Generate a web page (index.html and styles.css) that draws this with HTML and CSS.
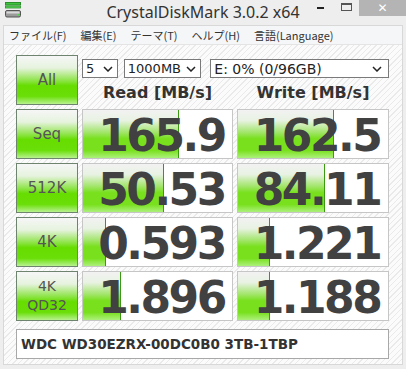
FILE: index.html
```html
<!DOCTYPE html>
<html lang="ja">
<head>
    <meta charset="UTF-8">
    <title>CrystalDiskMark 3.0.2 x64</title>
    <link rel="stylesheet" href="styles.css">
</head>
<body>
    <div class="titlebar">
        <svg class="appicon" width="16" height="16" viewBox="0 0 16 16">
            <rect x="0.5" y="0.5" width="15" height="2.5" fill="#3fc43f" stroke="#2a8f2a"/>
            <rect x="0.5" y="4" width="15" height="2" fill="#5fd65f" stroke="#2a8f2a" stroke-width="0.8"/>
            <rect x="0.5" y="8.5" width="15" height="6.5" rx="1.5" fill="#9a9a9a" stroke="#555"/>
            <rect x="1.5" y="9.5" width="13" height="2" fill="#d8d8d8"/>
            <rect x="12" y="12" width="2" height="1.5" fill="#44dd44"/>
        </svg>
        <div class="title">CrystalDiskMark 3.0.2 x64</div>
        <div class="controls">
            <span class="ctl"><span class="min"></span></span>
            <span class="ctl"><span class="max"></span></span>
            <span class="ctl close">✕</span>
        </div>
    </div>
    <div class="window">
        <div class="menubar">
            <span>ファイル(F)</span>
            <span>編集(E)</span>
            <span>テーマ(T)</span>
            <span>ヘルプ(H)</span>
            <span>言語(Language)</span>
        </div>
        <div class="content">
            <div class="grid">
                <div class="btn">All</div>
                <div class="top">
                    <div class="selects">
                        <div class="select s-count">5<svg class="chev" viewBox="0 0 10 6"><path d="M1 1 L5 5 L9 1" fill="none" stroke="#222" stroke-width="1.5"/></svg></div>
                        <div class="select s-size">1000MB<svg class="chev" viewBox="0 0 10 6"><path d="M1 1 L5 5 L9 1" fill="none" stroke="#222" stroke-width="1.5"/></svg></div>
                        <div class="select s-drive">E: 0% (0/96GB)<svg class="chev" viewBox="0 0 10 6"><path d="M1 1 L5 5 L9 1" fill="none" stroke="#222" stroke-width="1.5"/></svg></div>
                    </div>
                    <div class="heads">
                        <div>Read [MB/s]</div>
                        <div>Write [MB/s]</div>
                    </div>
                </div>

                <div class="btn">Seq</div>
                <div class="bar"><div class="fill" style="width:95px"></div><span>165.9</span></div>
                <div class="bar"><div class="fill" style="width:95px"></div><span>162.5</span></div>

                <div class="btn">512K</div>
                <div class="bar"><div class="fill" style="width:80px"></div><span>50.53</span></div>
                <div class="bar"><div class="fill" style="width:86px"></div><span>84.11</span></div>

                <div class="btn">4K</div>
                <div class="bar"><div class="fill" style="width:22px"></div><span>0.593</span></div>
                <div class="bar"><div class="fill" style="width:31px"></div><span>1.221</span></div>

                <div class="btn two">4K<br>QD32</div>
                <div class="bar"><div class="fill" style="width:37px"></div><span>1.896</span></div>
                <div class="bar"><div class="fill" style="width:31px"></div><span>1.188</span></div>
            </div>
            <div class="drive">WDC WD30EZRX-00DC0B0 3TB-1TBP</div>
        </div>
    </div>
</body>
</html>
```

FILE: styles.css
```css
body {
    margin: 0;
    width: 406px;
    height: 369px;
    background-color: #eeeeee;
    font-family: "DejaVu Sans", sans-serif;
    overflow: hidden;
}
.titlebar {
    height: 25px;
    display: grid;
    grid-template-columns: 1fr auto 1fr;
    align-items: start;
}
.appicon {
    margin: 2px 0 0 5px;
}
.title {
    font-family: "Noto Sans", sans-serif;
    font-size: 16px;
    line-height: 24px;
    color: #333;
}
.controls {
    justify-self: end;
    display: flex;
}
.ctl {
    width: 26px;
    height: 16px;
    display: flex;
    justify-content: center;
    align-items: flex-start;
}
.min {
    width: 7px;
    height: 2px;
    margin-top: 7px;
    background-color: #222;
}
.max {
    width: 9px;
    height: 5px;
    margin-top: 3px;
    border: 1px solid #555;
    border-top-width: 2px;
}
.close {
    width: 47px;
    background-color: #b4b4b4;
    color: #fff;
    font-size: 12px;
    font-weight: bold;
    line-height: 16px;
    align-items: center;
}
.window {
    margin: 0 3px;
    height: 338px;
    border: 1px solid #d8d8d8;
    background-color: #f9f9f9;
}
.menubar {
    height: 18px;
    display: flex;
    gap: 14px;
    padding-left: 5px;
    background-color: #f5f6f8;
    border-bottom: 1px solid #e4e4e4;
    font-family: "Noto Sans CJK JP", sans-serif;
    font-size: 11px;
    line-height: 18px;
    color: #333;
}
.content {
    padding: 10px 12px 5px 12px;
    height: 304px;
    background: repeating-linear-gradient(135deg, #fbfbfb 0px, #fbfbfb 3px, #eaeaea 3px, #eaeaea 4px);
}
.grid {
    display: grid;
    grid-template-columns: 62px 151px 152px;
    grid-auto-rows: 50px;
    column-gap: 4px;
    row-gap: 4px;
}
.btn {
    box-sizing: border-box;
    border: 1px solid #6f846f;
    background: linear-gradient(#f6f6f6 0%, #e6f3de 25%, #98e65a 48%, #66dd00 62%, #6ade08 84%, #b8f290 100%);
    display: flex;
    justify-content: center;
    align-items: center;
    text-align: center;
    font-size: 15px;
    color: #555;
}
.btn.two {
    font-size: 14px;
    line-height: 19px;
}
.top {
    grid-column: 2 / 4;
    display: flex;
    flex-direction: column;
}
.selects {
    display: flex;
    margin-top: 4px;
}
.select {
    box-sizing: border-box;
    height: 19px;
    border: 1px solid #7a7a7a;
    background-color: #fff;
    display: flex;
    align-items: center;
    justify-content: space-between;
    padding: 0 4px 0 3px;
    font-size: 13px;
    color: #222;
}
.chev {
    width: 10px;
    height: 6px;
}
.s-count {
    width: 36px;
}
.s-size {
    width: 78px;
    margin-left: 6px;
}
.s-drive {
    width: 180px;
    margin-left: 9px;
    padding-right: 6px;
    font-size: 14px;
}
.heads {
    display: grid;
    grid-template-columns: 151px 152px;
    column-gap: 4px;
    margin-top: 5px;
    font-weight: bold;
    font-size: 16px;
    color: #333;
    text-align: center;
}
.bar {
    position: relative;
    box-sizing: border-box;
    border: 1px solid #c6c6c6;
    background-color: #fff;
    display: flex;
    align-items: center;
    justify-content: center;
    padding: 3px 0 0 8px;
}
.fill {
    position: absolute;
    left: 0;
    top: 0;
    bottom: 0;
    border-right: 1px solid #3a9a10;
    background: linear-gradient(#f2f2f2 0%, #e8f2e2 22%, #a6e672 45%, #78e01c 60%, #78e01c 84%, #acf07c 100%);
}
.bar span {
    position: relative;
    font-family: "DejaVu Sans", sans-serif;
    font-weight: bold;
    font-size: 44px;
    letter-spacing: -2.5px;
    line-height: 1;
    color: #414141;
}
.drive {
    box-sizing: border-box;
    margin-top: 8px;
    width: 373px;
    height: 30px;
    border: 1px solid #a8a8a8;
    background-color: #fff;
    padding-left: 4px;
    font-weight: bold;
    font-size: 13.5px;
    line-height: 28px;
    color: #333;
}
```
